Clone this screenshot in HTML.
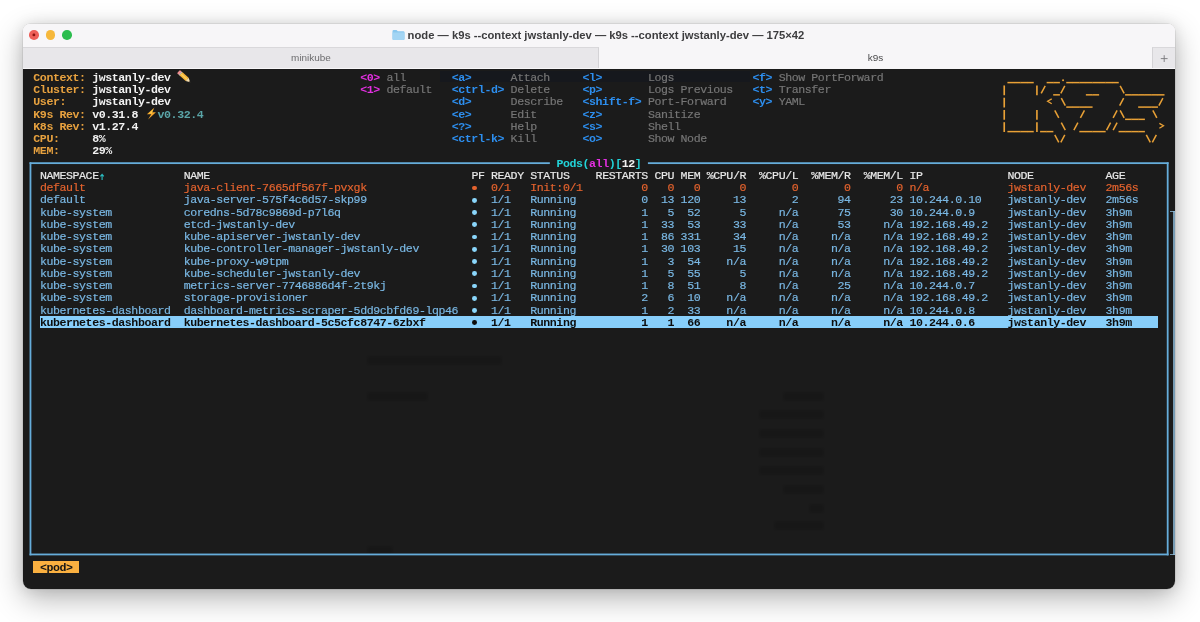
<!DOCTYPE html>
<html><head><meta charset="utf-8"><title>k9s</title>
<style>
html,body{margin:0;padding:0;}
body{width:1200px;height:622px;overflow:hidden;background:#fff;position:relative;font-family:"Liberation Sans",sans-serif;}
#win{position:absolute;left:23px;top:24px;width:1152px;height:565px;border-radius:7px 7px 8px 8px;background:linear-gradient(to bottom,#f7f6f8 0,#f7f6f8 45px,#1b1b1b 45px,#1b1b1b 100%);
 box-shadow:0 0 0 0.5px rgba(0,0,0,.12),0 10px 30px rgba(0,0,0,.29),0 0 14px rgba(0,0,0,.10);overflow:hidden;}
#titlebar{position:absolute;left:0;top:0;width:1152px;height:23px;background:#f7f6f8;}
#tabs{position:absolute;left:0;top:23px;width:1152px;height:22px;background:#f7f6f8;}
#tab1{position:absolute;left:0;top:0;width:576px;height:21px;background:#e8e7ea;border-top:1px solid #d9d8db;border-right:1px solid #d4d3d6;box-sizing:border-box;}
#plus{position:absolute;left:1128.9px;top:0;width:23.1px;height:21px;background:#e8e7ea;border-top:1px solid #d9d8db;border-left:1px solid #d4d3d6;box-sizing:border-box;}
.tabtxt{position:absolute;top:0;height:22px;line-height:21.6px;font-size:9.95px;color:#6c6c6e;text-align:center;transform:translateZ(0);}
.tl{position:absolute;top:6.2px;width:9.7px;height:9.7px;border-radius:50%;}
#title{position:absolute;left:384.6px;top:0;height:23px;line-height:22.6px;font-size:11.24px;font-weight:bold;color:#3c3c3e;white-space:pre;transform:translateZ(0);}
#term{position:absolute;left:0;top:0;width:1200px;height:622px;font-family:"Liberation Mono",monospace;font-size:11.6px;line-height:12.25px;letter-spacing:-0.4231px;transform:translateZ(0);}
.t{position:absolute;white-space:pre;height:12.25px;-webkit-text-stroke:0.18px currentColor;}
.ov{position:absolute;left:0;top:0;}
.dot{position:absolute;width:4.8px;height:4.8px;border-radius:50%;}
.sel{position:absolute;background:#87cefa;}
.crumb{position:absolute;background:#fab040;}
.ln{position:absolute;background:#66addb;}
.gb{position:absolute;z-index:-1;background:#0d0d0d;opacity:.24;filter:blur(0.9px);}
.gh{position:absolute;background:#8fbcd9;opacity:.8}
</style></head><body>
<div id="win">
 <div id="titlebar">
  <div class="tl" style="left:6.4px;background:#ee5e58;"></div>
  <div class="tl" style="left:22.8px;background:#f6b83c;"></div>
  <div class="tl" style="left:39.2px;background:#2cbd4e;"></div>
  <svg style="position:absolute;left:6.4px;top:6.2px" width="9.7" height="9.7" viewBox="0 0 9.7 9.7"><circle cx="4.9" cy="4.9" r="1.45" fill="#8c120e"/></svg>
  <svg style="position:absolute;left:368.5px;top:4.8px" width="13" height="12" viewBox="0 0 13 12"><path d="M0.5 2.2 Q0.5 1 1.7 1 L4.6 1 L5.8 2.2 L11.3 2.2 Q12.5 2.2 12.5 3.4 L12.5 9.8 Q12.5 11 11.3 11 L1.7 11 Q0.5 11 0.5 9.8 Z" fill="#8ac8ef"/><path d="M0.5 3.6 L12.5 3.6 L12.5 9.8 Q12.5 11 11.3 11 L1.7 11 Q0.5 11 0.5 9.8 Z" fill="#a3d5f4"/></svg>
  <div id="title">node — k9s --context jwstanly-dev — k9s --context jwstanly-dev — 175×42</div>
 </div>
 <div id="tabs">
  <div id="tab1"></div>
  <div class="tabtxt" style="left:0;width:576px;">minikube</div>
  <div class="tabtxt" style="left:576px;width:553px;color:#4a4a4c">k9s</div>
  <div id="plus"><svg width="22" height="22" viewBox="0 0 22 22" style="position:absolute;left:0;top:0"><path d="M7.8 10.6 H14.6 M11.2 7.2 V14" stroke="#77767a" stroke-width="0.9" fill="none"/></svg></div>
 </div>
</div>
<div id="term">
<svg class="ov" width="1200" height="622" viewBox="0 0 1200 622" fill="#66addb">
<rect x="29.57" y="162.25" width="520.27" height="1.8"/>
<rect x="647.91" y="162.25" width="520.67" height="1.8"/>
<rect x="29.57" y="553.55" width="1139.01" height="1.8"/>
<rect x="29.57" y="162.25" width="1.8" height="393.10"/>
<rect x="1166.78" y="162.25" width="1.8" height="393.10"/>
</svg>
<div class="gh" style="left:1173.4px;top:211px;width:1.6px;height:344.05px"></div>
<div class="gh" style="left:1170.4px;top:210.6px;width:4.6px;height:1.2px"></div>
<div class="gh" style="left:1170.4px;top:553.85px;width:4.6px;height:1.2px"></div>
<span class="t" style="left:33.34px;top:71.90px;color:#e8a23f;font-weight:bold;-webkit-text-stroke:0;">Context:</span>
<span class="t" style="left:92.18px;top:71.90px;color:#f2f2f2;font-weight:bold;-webkit-text-stroke:0;">jwstanly-dev</span>
<span class="t" style="left:33.34px;top:84.15px;color:#e8a23f;font-weight:bold;-webkit-text-stroke:0;">Cluster:</span>
<span class="t" style="left:92.18px;top:84.15px;color:#f2f2f2;font-weight:bold;-webkit-text-stroke:0;">jwstanly-dev</span>
<span class="t" style="left:33.34px;top:96.40px;color:#e8a23f;font-weight:bold;-webkit-text-stroke:0;">User:</span>
<span class="t" style="left:92.18px;top:96.40px;color:#f2f2f2;font-weight:bold;-webkit-text-stroke:0;">jwstanly-dev</span>
<span class="t" style="left:33.34px;top:108.65px;color:#e8a23f;font-weight:bold;-webkit-text-stroke:0;">K9s Rev:</span>
<span class="t" style="left:92.18px;top:108.65px;color:#f2f2f2;font-weight:bold;-webkit-text-stroke:0;">v0.31.8</span>
<span class="t" style="left:33.34px;top:120.90px;color:#e8a23f;font-weight:bold;-webkit-text-stroke:0;">K8s Rev:</span>
<span class="t" style="left:92.18px;top:120.90px;color:#f2f2f2;font-weight:bold;-webkit-text-stroke:0;">v1.27.4</span>
<span class="t" style="left:33.34px;top:133.15px;color:#e8a23f;font-weight:bold;-webkit-text-stroke:0;">CPU:</span>
<span class="t" style="left:92.18px;top:133.15px;color:#f2f2f2;font-weight:bold;-webkit-text-stroke:0;">8%</span>
<span class="t" style="left:33.34px;top:145.40px;color:#e8a23f;font-weight:bold;-webkit-text-stroke:0;">MEM:</span>
<span class="t" style="left:92.18px;top:145.40px;color:#f2f2f2;font-weight:bold;-webkit-text-stroke:0;">29%</span>
<span class="t" style="left:157.56px;top:108.65px;color:#5aa5a8;font-weight:bold;-webkit-text-stroke:0;">v0.32.4</span>
<span class="t" style="left:360.24px;top:71.90px;color:#e22fe0;font-weight:bold;-webkit-text-stroke:0;">&lt;0&gt;</span>
<span class="t" style="left:386.39px;top:71.90px;color:#767676;">all</span>
<span class="t" style="left:360.24px;top:84.15px;color:#e22fe0;font-weight:bold;-webkit-text-stroke:0;">&lt;1&gt;</span>
<span class="t" style="left:386.39px;top:84.15px;color:#767676;">default</span>
<span class="t" style="left:451.77px;top:71.90px;color:#2d8ff0;font-weight:bold;-webkit-text-stroke:0;">&lt;a&gt;</span>
<span class="t" style="left:510.61px;top:71.90px;color:#767676;">Attach</span>
<span class="t" style="left:451.77px;top:84.15px;color:#2d8ff0;font-weight:bold;-webkit-text-stroke:0;">&lt;ctrl-d&gt;</span>
<span class="t" style="left:510.61px;top:84.15px;color:#767676;">Delete</span>
<span class="t" style="left:451.77px;top:96.40px;color:#2d8ff0;font-weight:bold;-webkit-text-stroke:0;">&lt;d&gt;</span>
<span class="t" style="left:510.61px;top:96.40px;color:#767676;">Describe</span>
<span class="t" style="left:451.77px;top:108.65px;color:#2d8ff0;font-weight:bold;-webkit-text-stroke:0;">&lt;e&gt;</span>
<span class="t" style="left:510.61px;top:108.65px;color:#767676;">Edit</span>
<span class="t" style="left:451.77px;top:120.90px;color:#2d8ff0;font-weight:bold;-webkit-text-stroke:0;">&lt;?&gt;</span>
<span class="t" style="left:510.61px;top:120.90px;color:#767676;">Help</span>
<span class="t" style="left:451.77px;top:133.15px;color:#2d8ff0;font-weight:bold;-webkit-text-stroke:0;">&lt;ctrl-k&gt;</span>
<span class="t" style="left:510.61px;top:133.15px;color:#767676;">Kill</span>
<span class="t" style="left:582.53px;top:71.90px;color:#2d8ff0;font-weight:bold;-webkit-text-stroke:0;">&lt;l&gt;</span>
<span class="t" style="left:647.91px;top:71.90px;color:#767676;">Logs</span>
<span class="t" style="left:582.53px;top:84.15px;color:#2d8ff0;font-weight:bold;-webkit-text-stroke:0;">&lt;p&gt;</span>
<span class="t" style="left:647.91px;top:84.15px;color:#767676;">Logs Previous</span>
<span class="t" style="left:582.53px;top:96.40px;color:#2d8ff0;font-weight:bold;-webkit-text-stroke:0;">&lt;shift-f&gt;</span>
<span class="t" style="left:647.91px;top:96.40px;color:#767676;">Port-Forward</span>
<span class="t" style="left:582.53px;top:108.65px;color:#2d8ff0;font-weight:bold;-webkit-text-stroke:0;">&lt;z&gt;</span>
<span class="t" style="left:647.91px;top:108.65px;color:#767676;">Sanitize</span>
<span class="t" style="left:582.53px;top:120.90px;color:#2d8ff0;font-weight:bold;-webkit-text-stroke:0;">&lt;s&gt;</span>
<span class="t" style="left:647.91px;top:120.90px;color:#767676;">Shell</span>
<span class="t" style="left:582.53px;top:133.15px;color:#2d8ff0;font-weight:bold;-webkit-text-stroke:0;">&lt;o&gt;</span>
<span class="t" style="left:647.91px;top:133.15px;color:#767676;">Show Node</span>
<span class="t" style="left:752.52px;top:71.90px;color:#2d8ff0;font-weight:bold;-webkit-text-stroke:0;">&lt;f&gt;</span>
<span class="t" style="left:778.67px;top:71.90px;color:#767676;">Show PortForward</span>
<span class="t" style="left:752.52px;top:84.15px;color:#2d8ff0;font-weight:bold;-webkit-text-stroke:0;">&lt;t&gt;</span>
<span class="t" style="left:778.67px;top:84.15px;color:#767676;">Transfer</span>
<span class="t" style="left:752.52px;top:96.40px;color:#2d8ff0;font-weight:bold;-webkit-text-stroke:0;">&lt;y&gt;</span>
<span class="t" style="left:778.67px;top:96.40px;color:#767676;">YAML</span>
<svg class="ov" width="1200" height="622" viewBox="0 0 1200 622" fill="none" stroke="#e9a136"><path d="M1007.40 82.60H1014.14" stroke-width="1.5"/><path d="M1013.94 82.60H1020.68" stroke-width="1.5"/><path d="M1020.48 82.60H1027.21" stroke-width="1.5"/><path d="M1027.01 82.60H1033.75" stroke-width="1.5"/><path d="M1046.63 82.60H1053.37" stroke-width="1.5"/><path d="M1053.17 82.60H1059.90" stroke-width="1.5"/><circle cx="1063.07" cy="80.20" r="1.0" fill="#e9a136" stroke="none"/><path d="M1066.24 82.60H1072.98" stroke-width="1.5"/><path d="M1072.78 82.60H1079.52" stroke-width="1.5"/><path d="M1079.32 82.60H1086.06" stroke-width="1.5"/><path d="M1085.86 82.60H1092.59" stroke-width="1.5"/><path d="M1092.39 82.60H1099.13" stroke-width="1.5"/><path d="M1098.93 82.60H1105.67" stroke-width="1.5"/><path d="M1105.47 82.60H1112.21" stroke-width="1.5"/><path d="M1112.01 82.60H1118.75" stroke-width="1.5"/><path d="M1004.23 85.45V95.25" stroke-width="1.65"/><path d="M1036.92 85.45V95.25" stroke-width="1.65"/><path d="M1041.19 93.45L1045.19 85.85" stroke-width="1.5"/><path d="M1053.17 94.85H1059.90" stroke-width="1.5"/><path d="M1060.80 93.45L1064.80 85.85" stroke-width="1.5"/><path d="M1085.86 94.85H1092.59" stroke-width="1.5"/><path d="M1092.39 94.85H1099.13" stroke-width="1.5"/><path d="M1120.15 85.85L1124.15 93.45" stroke-width="1.5"/><path d="M1125.08 94.85H1131.82" stroke-width="1.5"/><path d="M1131.62 94.85H1138.36" stroke-width="1.5"/><path d="M1138.16 94.85H1144.90" stroke-width="1.5"/><path d="M1144.70 94.85H1151.44" stroke-width="1.5"/><path d="M1151.24 94.85H1157.97" stroke-width="1.5"/><path d="M1157.77 94.85H1164.51" stroke-width="1.5"/><path d="M1004.23 97.70V107.50" stroke-width="1.65"/><path d="M1051.73 98.90L1047.63 101.30L1051.73 103.70" stroke-width="1.3"/><path d="M1061.30 98.10L1065.30 105.70" stroke-width="1.5"/><path d="M1066.24 107.10H1072.98" stroke-width="1.5"/><path d="M1072.78 107.10H1079.52" stroke-width="1.5"/><path d="M1079.32 107.10H1086.06" stroke-width="1.5"/><path d="M1085.86 107.10H1092.59" stroke-width="1.5"/><path d="M1119.65 105.70L1123.65 98.10" stroke-width="1.5"/><path d="M1138.16 107.10H1144.90" stroke-width="1.5"/><path d="M1144.70 107.10H1151.44" stroke-width="1.5"/><path d="M1151.24 107.10H1157.97" stroke-width="1.5"/><path d="M1158.87 105.70L1162.87 98.10" stroke-width="1.5"/><path d="M1004.23 109.95V119.75" stroke-width="1.65"/><path d="M1036.92 109.95V119.75" stroke-width="1.65"/><path d="M1054.77 110.35L1058.77 117.95" stroke-width="1.5"/><path d="M1080.42 117.95L1084.42 110.35" stroke-width="1.5"/><path d="M1113.11 117.95L1117.11 110.35" stroke-width="1.5"/><path d="M1120.15 110.35L1124.15 117.95" stroke-width="1.5"/><path d="M1125.08 119.35H1131.82" stroke-width="1.5"/><path d="M1131.62 119.35H1138.36" stroke-width="1.5"/><path d="M1138.16 119.35H1144.90" stroke-width="1.5"/><path d="M1152.84 110.35L1156.84 117.95" stroke-width="1.5"/><path d="M1004.23 122.20V132.00" stroke-width="1.65"/><path d="M1007.40 131.60H1014.14" stroke-width="1.5"/><path d="M1013.94 131.60H1020.68" stroke-width="1.5"/><path d="M1020.48 131.60H1027.21" stroke-width="1.5"/><path d="M1027.01 131.60H1033.75" stroke-width="1.5"/><path d="M1036.92 122.20V132.00" stroke-width="1.65"/><path d="M1040.09 131.60H1046.83" stroke-width="1.5"/><path d="M1046.63 131.60H1053.37" stroke-width="1.5"/><path d="M1061.30 122.60L1065.30 130.20" stroke-width="1.5"/><path d="M1073.88 130.20L1077.88 122.60" stroke-width="1.5"/><path d="M1079.32 131.60H1086.06" stroke-width="1.5"/><path d="M1085.86 131.60H1092.59" stroke-width="1.5"/><path d="M1092.39 131.60H1099.13" stroke-width="1.5"/><path d="M1098.93 131.60H1105.67" stroke-width="1.5"/><path d="M1106.57 130.20L1110.57 122.60" stroke-width="1.5"/><path d="M1113.11 130.20L1117.11 122.60" stroke-width="1.5"/><path d="M1118.55 131.60H1125.28" stroke-width="1.5"/><path d="M1125.08 131.60H1131.82" stroke-width="1.5"/><path d="M1131.62 131.60H1138.36" stroke-width="1.5"/><path d="M1138.16 131.60H1144.90" stroke-width="1.5"/><path d="M1159.37 123.40L1163.47 125.80L1159.37 128.20" stroke-width="1.3"/><path d="M1054.77 134.85L1058.77 142.45" stroke-width="1.5"/><path d="M1060.80 142.45L1064.80 134.85" stroke-width="1.5"/><path d="M1146.30 134.85L1150.30 142.45" stroke-width="1.5"/><path d="M1152.34 142.45L1156.34 134.85" stroke-width="1.5"/></svg>
<span class="t" style="left:556.38px;top:157.65px;color:#22d3d8;font-weight:bold;-webkit-text-stroke:0;">Pods(</span>
<span class="t" style="left:589.07px;top:157.65px;color:#e22fe0;font-weight:bold;-webkit-text-stroke:0;">all</span>
<span class="t" style="left:608.68px;top:157.65px;color:#22d3d8;font-weight:bold;-webkit-text-stroke:0;">)[</span>
<span class="t" style="left:621.76px;top:157.65px;color:#f2f2f2;font-weight:bold;-webkit-text-stroke:0;">12</span>
<span class="t" style="left:634.83px;top:157.65px;color:#22d3d8;font-weight:bold;-webkit-text-stroke:0;">]</span>
<span class="t" style="left:39.88px;top:169.90px;color:#e9e9e9;">NAMESPACE</span>
<span class="t" style="left:183.71px;top:169.90px;color:#e9e9e9;">NAME</span>
<span class="t" style="left:471.38px;top:169.90px;color:#e9e9e9;">PF</span>
<span class="t" style="left:491.00px;top:169.90px;color:#e9e9e9;">READY</span>
<span class="t" style="left:530.23px;top:169.90px;color:#e9e9e9;">STATUS</span>
<span class="t" style="left:595.61px;top:169.90px;color:#e9e9e9;">RESTARTS</span>
<span class="t" style="left:654.45px;top:169.90px;color:#e9e9e9;">CPU</span>
<span class="t" style="left:680.60px;top:169.90px;color:#e9e9e9;">MEM</span>
<span class="t" style="left:706.75px;top:169.90px;color:#e9e9e9;">%CPU/R</span>
<span class="t" style="left:759.06px;top:169.90px;color:#e9e9e9;">%CPU/L</span>
<span class="t" style="left:811.36px;top:169.90px;color:#e9e9e9;">%MEM/R</span>
<span class="t" style="left:863.66px;top:169.90px;color:#e9e9e9;">%MEM/L</span>
<span class="t" style="left:909.43px;top:169.90px;color:#e9e9e9;">IP</span>
<span class="t" style="left:1007.50px;top:169.90px;color:#e9e9e9;">NODE</span>
<span class="t" style="left:1105.57px;top:169.90px;color:#e9e9e9;">AGE</span>
<span class="t" style="left:39.88px;top:182.15px;color:#e5632e;">default</span>
<span class="t" style="left:183.71px;top:182.15px;color:#e5632e;">java-client-7665df567f-pvxgk</span>
<i class="dot" style="left:472.25px;top:185.50px;background:#e5632e"></i>
<span class="t" style="left:491.00px;top:182.15px;color:#e5632e;">0/1</span>
<span class="t" style="left:530.23px;top:182.15px;color:#e5632e;">Init:0/1</span>
<span class="t" style="left:641.37px;top:182.15px;color:#e5632e;">0</span>
<span class="t" style="left:667.52px;top:182.15px;color:#e5632e;">0</span>
<span class="t" style="left:693.68px;top:182.15px;color:#e5632e;">0</span>
<span class="t" style="left:739.44px;top:182.15px;color:#e5632e;">0</span>
<span class="t" style="left:791.75px;top:182.15px;color:#e5632e;">0</span>
<span class="t" style="left:844.05px;top:182.15px;color:#e5632e;">0</span>
<span class="t" style="left:896.35px;top:182.15px;color:#e5632e;">0</span>
<span class="t" style="left:909.43px;top:182.15px;color:#e5632e;">n/a</span>
<span class="t" style="left:1007.50px;top:182.15px;color:#e5632e;">jwstanly-dev</span>
<span class="t" style="left:1105.57px;top:182.15px;color:#e5632e;">2m56s</span>
<span class="t" style="left:39.88px;top:194.40px;color:#7ab8e4;">default</span>
<span class="t" style="left:183.71px;top:194.40px;color:#7ab8e4;">java-server-575f4c6d57-skp99</span>
<i class="dot" style="left:472.25px;top:197.75px;background:#8ad6fb"></i>
<span class="t" style="left:491.00px;top:194.40px;color:#7ab8e4;">1/1</span>
<span class="t" style="left:530.23px;top:194.40px;color:#7ab8e4;">Running</span>
<span class="t" style="left:641.37px;top:194.40px;color:#7ab8e4;">0</span>
<span class="t" style="left:660.99px;top:194.40px;color:#7ab8e4;">13</span>
<span class="t" style="left:680.60px;top:194.40px;color:#7ab8e4;">120</span>
<span class="t" style="left:732.90px;top:194.40px;color:#7ab8e4;">13</span>
<span class="t" style="left:791.75px;top:194.40px;color:#7ab8e4;">2</span>
<span class="t" style="left:837.51px;top:194.40px;color:#7ab8e4;">94</span>
<span class="t" style="left:889.82px;top:194.40px;color:#7ab8e4;">23</span>
<span class="t" style="left:909.43px;top:194.40px;color:#7ab8e4;">10.244.0.10</span>
<span class="t" style="left:1007.50px;top:194.40px;color:#7ab8e4;">jwstanly-dev</span>
<span class="t" style="left:1105.57px;top:194.40px;color:#7ab8e4;">2m56s</span>
<span class="t" style="left:39.88px;top:206.65px;color:#7ab8e4;">kube-system</span>
<span class="t" style="left:183.71px;top:206.65px;color:#7ab8e4;">coredns-5d78c9869d-p7l6q</span>
<i class="dot" style="left:472.25px;top:210.00px;background:#8ad6fb"></i>
<span class="t" style="left:491.00px;top:206.65px;color:#7ab8e4;">1/1</span>
<span class="t" style="left:530.23px;top:206.65px;color:#7ab8e4;">Running</span>
<span class="t" style="left:641.37px;top:206.65px;color:#7ab8e4;">1</span>
<span class="t" style="left:667.52px;top:206.65px;color:#7ab8e4;">5</span>
<span class="t" style="left:687.14px;top:206.65px;color:#7ab8e4;">52</span>
<span class="t" style="left:739.44px;top:206.65px;color:#7ab8e4;">5</span>
<span class="t" style="left:778.67px;top:206.65px;color:#7ab8e4;">n/a</span>
<span class="t" style="left:837.51px;top:206.65px;color:#7ab8e4;">75</span>
<span class="t" style="left:889.82px;top:206.65px;color:#7ab8e4;">30</span>
<span class="t" style="left:909.43px;top:206.65px;color:#7ab8e4;">10.244.0.9</span>
<span class="t" style="left:1007.50px;top:206.65px;color:#7ab8e4;">jwstanly-dev</span>
<span class="t" style="left:1105.57px;top:206.65px;color:#7ab8e4;">3h9m</span>
<span class="t" style="left:39.88px;top:218.90px;color:#7ab8e4;">kube-system</span>
<span class="t" style="left:183.71px;top:218.90px;color:#7ab8e4;">etcd-jwstanly-dev</span>
<i class="dot" style="left:472.25px;top:222.25px;background:#8ad6fb"></i>
<span class="t" style="left:491.00px;top:218.90px;color:#7ab8e4;">1/1</span>
<span class="t" style="left:530.23px;top:218.90px;color:#7ab8e4;">Running</span>
<span class="t" style="left:641.37px;top:218.90px;color:#7ab8e4;">1</span>
<span class="t" style="left:660.99px;top:218.90px;color:#7ab8e4;">33</span>
<span class="t" style="left:687.14px;top:218.90px;color:#7ab8e4;">53</span>
<span class="t" style="left:732.90px;top:218.90px;color:#7ab8e4;">33</span>
<span class="t" style="left:778.67px;top:218.90px;color:#7ab8e4;">n/a</span>
<span class="t" style="left:837.51px;top:218.90px;color:#7ab8e4;">53</span>
<span class="t" style="left:883.28px;top:218.90px;color:#7ab8e4;">n/a</span>
<span class="t" style="left:909.43px;top:218.90px;color:#7ab8e4;">192.168.49.2</span>
<span class="t" style="left:1007.50px;top:218.90px;color:#7ab8e4;">jwstanly-dev</span>
<span class="t" style="left:1105.57px;top:218.90px;color:#7ab8e4;">3h9m</span>
<span class="t" style="left:39.88px;top:231.15px;color:#7ab8e4;">kube-system</span>
<span class="t" style="left:183.71px;top:231.15px;color:#7ab8e4;">kube-apiserver-jwstanly-dev</span>
<i class="dot" style="left:472.25px;top:234.50px;background:#8ad6fb"></i>
<span class="t" style="left:491.00px;top:231.15px;color:#7ab8e4;">1/1</span>
<span class="t" style="left:530.23px;top:231.15px;color:#7ab8e4;">Running</span>
<span class="t" style="left:641.37px;top:231.15px;color:#7ab8e4;">1</span>
<span class="t" style="left:660.99px;top:231.15px;color:#7ab8e4;">86</span>
<span class="t" style="left:680.60px;top:231.15px;color:#7ab8e4;">331</span>
<span class="t" style="left:732.90px;top:231.15px;color:#7ab8e4;">34</span>
<span class="t" style="left:778.67px;top:231.15px;color:#7ab8e4;">n/a</span>
<span class="t" style="left:830.97px;top:231.15px;color:#7ab8e4;">n/a</span>
<span class="t" style="left:883.28px;top:231.15px;color:#7ab8e4;">n/a</span>
<span class="t" style="left:909.43px;top:231.15px;color:#7ab8e4;">192.168.49.2</span>
<span class="t" style="left:1007.50px;top:231.15px;color:#7ab8e4;">jwstanly-dev</span>
<span class="t" style="left:1105.57px;top:231.15px;color:#7ab8e4;">3h9m</span>
<span class="t" style="left:39.88px;top:243.40px;color:#7ab8e4;">kube-system</span>
<span class="t" style="left:183.71px;top:243.40px;color:#7ab8e4;">kube-controller-manager-jwstanly-dev</span>
<i class="dot" style="left:472.25px;top:246.75px;background:#8ad6fb"></i>
<span class="t" style="left:491.00px;top:243.40px;color:#7ab8e4;">1/1</span>
<span class="t" style="left:530.23px;top:243.40px;color:#7ab8e4;">Running</span>
<span class="t" style="left:641.37px;top:243.40px;color:#7ab8e4;">1</span>
<span class="t" style="left:660.99px;top:243.40px;color:#7ab8e4;">30</span>
<span class="t" style="left:680.60px;top:243.40px;color:#7ab8e4;">103</span>
<span class="t" style="left:732.90px;top:243.40px;color:#7ab8e4;">15</span>
<span class="t" style="left:778.67px;top:243.40px;color:#7ab8e4;">n/a</span>
<span class="t" style="left:830.97px;top:243.40px;color:#7ab8e4;">n/a</span>
<span class="t" style="left:883.28px;top:243.40px;color:#7ab8e4;">n/a</span>
<span class="t" style="left:909.43px;top:243.40px;color:#7ab8e4;">192.168.49.2</span>
<span class="t" style="left:1007.50px;top:243.40px;color:#7ab8e4;">jwstanly-dev</span>
<span class="t" style="left:1105.57px;top:243.40px;color:#7ab8e4;">3h9m</span>
<span class="t" style="left:39.88px;top:255.65px;color:#7ab8e4;">kube-system</span>
<span class="t" style="left:183.71px;top:255.65px;color:#7ab8e4;">kube-proxy-w9tpm</span>
<i class="dot" style="left:472.25px;top:259.00px;background:#8ad6fb"></i>
<span class="t" style="left:491.00px;top:255.65px;color:#7ab8e4;">1/1</span>
<span class="t" style="left:530.23px;top:255.65px;color:#7ab8e4;">Running</span>
<span class="t" style="left:641.37px;top:255.65px;color:#7ab8e4;">1</span>
<span class="t" style="left:667.52px;top:255.65px;color:#7ab8e4;">3</span>
<span class="t" style="left:687.14px;top:255.65px;color:#7ab8e4;">54</span>
<span class="t" style="left:726.37px;top:255.65px;color:#7ab8e4;">n/a</span>
<span class="t" style="left:778.67px;top:255.65px;color:#7ab8e4;">n/a</span>
<span class="t" style="left:830.97px;top:255.65px;color:#7ab8e4;">n/a</span>
<span class="t" style="left:883.28px;top:255.65px;color:#7ab8e4;">n/a</span>
<span class="t" style="left:909.43px;top:255.65px;color:#7ab8e4;">192.168.49.2</span>
<span class="t" style="left:1007.50px;top:255.65px;color:#7ab8e4;">jwstanly-dev</span>
<span class="t" style="left:1105.57px;top:255.65px;color:#7ab8e4;">3h9m</span>
<span class="t" style="left:39.88px;top:267.90px;color:#7ab8e4;">kube-system</span>
<span class="t" style="left:183.71px;top:267.90px;color:#7ab8e4;">kube-scheduler-jwstanly-dev</span>
<i class="dot" style="left:472.25px;top:271.25px;background:#8ad6fb"></i>
<span class="t" style="left:491.00px;top:267.90px;color:#7ab8e4;">1/1</span>
<span class="t" style="left:530.23px;top:267.90px;color:#7ab8e4;">Running</span>
<span class="t" style="left:641.37px;top:267.90px;color:#7ab8e4;">1</span>
<span class="t" style="left:667.52px;top:267.90px;color:#7ab8e4;">5</span>
<span class="t" style="left:687.14px;top:267.90px;color:#7ab8e4;">55</span>
<span class="t" style="left:739.44px;top:267.90px;color:#7ab8e4;">5</span>
<span class="t" style="left:778.67px;top:267.90px;color:#7ab8e4;">n/a</span>
<span class="t" style="left:830.97px;top:267.90px;color:#7ab8e4;">n/a</span>
<span class="t" style="left:883.28px;top:267.90px;color:#7ab8e4;">n/a</span>
<span class="t" style="left:909.43px;top:267.90px;color:#7ab8e4;">192.168.49.2</span>
<span class="t" style="left:1007.50px;top:267.90px;color:#7ab8e4;">jwstanly-dev</span>
<span class="t" style="left:1105.57px;top:267.90px;color:#7ab8e4;">3h9m</span>
<span class="t" style="left:39.88px;top:280.15px;color:#7ab8e4;">kube-system</span>
<span class="t" style="left:183.71px;top:280.15px;color:#7ab8e4;">metrics-server-7746886d4f-2t9kj</span>
<i class="dot" style="left:472.25px;top:283.50px;background:#8ad6fb"></i>
<span class="t" style="left:491.00px;top:280.15px;color:#7ab8e4;">1/1</span>
<span class="t" style="left:530.23px;top:280.15px;color:#7ab8e4;">Running</span>
<span class="t" style="left:641.37px;top:280.15px;color:#7ab8e4;">1</span>
<span class="t" style="left:667.52px;top:280.15px;color:#7ab8e4;">8</span>
<span class="t" style="left:687.14px;top:280.15px;color:#7ab8e4;">51</span>
<span class="t" style="left:739.44px;top:280.15px;color:#7ab8e4;">8</span>
<span class="t" style="left:778.67px;top:280.15px;color:#7ab8e4;">n/a</span>
<span class="t" style="left:837.51px;top:280.15px;color:#7ab8e4;">25</span>
<span class="t" style="left:883.28px;top:280.15px;color:#7ab8e4;">n/a</span>
<span class="t" style="left:909.43px;top:280.15px;color:#7ab8e4;">10.244.0.7</span>
<span class="t" style="left:1007.50px;top:280.15px;color:#7ab8e4;">jwstanly-dev</span>
<span class="t" style="left:1105.57px;top:280.15px;color:#7ab8e4;">3h9m</span>
<span class="t" style="left:39.88px;top:292.40px;color:#7ab8e4;">kube-system</span>
<span class="t" style="left:183.71px;top:292.40px;color:#7ab8e4;">storage-provisioner</span>
<i class="dot" style="left:472.25px;top:295.75px;background:#8ad6fb"></i>
<span class="t" style="left:491.00px;top:292.40px;color:#7ab8e4;">1/1</span>
<span class="t" style="left:530.23px;top:292.40px;color:#7ab8e4;">Running</span>
<span class="t" style="left:641.37px;top:292.40px;color:#7ab8e4;">2</span>
<span class="t" style="left:667.52px;top:292.40px;color:#7ab8e4;">6</span>
<span class="t" style="left:687.14px;top:292.40px;color:#7ab8e4;">10</span>
<span class="t" style="left:726.37px;top:292.40px;color:#7ab8e4;">n/a</span>
<span class="t" style="left:778.67px;top:292.40px;color:#7ab8e4;">n/a</span>
<span class="t" style="left:830.97px;top:292.40px;color:#7ab8e4;">n/a</span>
<span class="t" style="left:883.28px;top:292.40px;color:#7ab8e4;">n/a</span>
<span class="t" style="left:909.43px;top:292.40px;color:#7ab8e4;">192.168.49.2</span>
<span class="t" style="left:1007.50px;top:292.40px;color:#7ab8e4;">jwstanly-dev</span>
<span class="t" style="left:1105.57px;top:292.40px;color:#7ab8e4;">3h9m</span>
<span class="t" style="left:39.88px;top:304.65px;color:#7ab8e4;">kubernetes-dashboard</span>
<span class="t" style="left:183.71px;top:304.65px;color:#7ab8e4;">dashboard-metrics-scraper-5dd9cbfd69-lqp46</span>
<i class="dot" style="left:472.25px;top:308.00px;background:#8ad6fb"></i>
<span class="t" style="left:491.00px;top:304.65px;color:#7ab8e4;">1/1</span>
<span class="t" style="left:530.23px;top:304.65px;color:#7ab8e4;">Running</span>
<span class="t" style="left:641.37px;top:304.65px;color:#7ab8e4;">1</span>
<span class="t" style="left:667.52px;top:304.65px;color:#7ab8e4;">2</span>
<span class="t" style="left:687.14px;top:304.65px;color:#7ab8e4;">33</span>
<span class="t" style="left:726.37px;top:304.65px;color:#7ab8e4;">n/a</span>
<span class="t" style="left:778.67px;top:304.65px;color:#7ab8e4;">n/a</span>
<span class="t" style="left:830.97px;top:304.65px;color:#7ab8e4;">n/a</span>
<span class="t" style="left:883.28px;top:304.65px;color:#7ab8e4;">n/a</span>
<span class="t" style="left:909.43px;top:304.65px;color:#7ab8e4;">10.244.0.8</span>
<span class="t" style="left:1007.50px;top:304.65px;color:#7ab8e4;">jwstanly-dev</span>
<span class="t" style="left:1105.57px;top:304.65px;color:#7ab8e4;">3h9m</span>
<div class="sel" style="left:39.88px;top:315.85px;width:1118.00px;height:11.95px"></div>
<span class="t" style="left:39.88px;top:316.90px;color:#0c0c0c;font-weight:bold;-webkit-text-stroke:0;">kubernetes-dashboard</span>
<span class="t" style="left:183.71px;top:316.90px;color:#0c0c0c;font-weight:bold;-webkit-text-stroke:0;">kubernetes-dashboard-5c5cfc8747-6zbxf</span>
<i class="dot" style="left:472.25px;top:320.25px;background:#0c0c0c"></i>
<span class="t" style="left:491.00px;top:316.90px;color:#0c0c0c;font-weight:bold;-webkit-text-stroke:0;">1/1</span>
<span class="t" style="left:530.23px;top:316.90px;color:#0c0c0c;font-weight:bold;-webkit-text-stroke:0;">Running</span>
<span class="t" style="left:641.37px;top:316.90px;color:#0c0c0c;font-weight:bold;-webkit-text-stroke:0;">1</span>
<span class="t" style="left:667.52px;top:316.90px;color:#0c0c0c;font-weight:bold;-webkit-text-stroke:0;">1</span>
<span class="t" style="left:687.14px;top:316.90px;color:#0c0c0c;font-weight:bold;-webkit-text-stroke:0;">66</span>
<span class="t" style="left:726.37px;top:316.90px;color:#0c0c0c;font-weight:bold;-webkit-text-stroke:0;">n/a</span>
<span class="t" style="left:778.67px;top:316.90px;color:#0c0c0c;font-weight:bold;-webkit-text-stroke:0;">n/a</span>
<span class="t" style="left:830.97px;top:316.90px;color:#0c0c0c;font-weight:bold;-webkit-text-stroke:0;">n/a</span>
<span class="t" style="left:883.28px;top:316.90px;color:#0c0c0c;font-weight:bold;-webkit-text-stroke:0;">n/a</span>
<span class="t" style="left:909.43px;top:316.90px;color:#0c0c0c;font-weight:bold;-webkit-text-stroke:0;">10.244.0.6</span>
<span class="t" style="left:1007.50px;top:316.90px;color:#0c0c0c;font-weight:bold;-webkit-text-stroke:0;">jwstanly-dev</span>
<span class="t" style="left:1105.57px;top:316.90px;color:#0c0c0c;font-weight:bold;-webkit-text-stroke:0;">3h9m</span>
<svg class="ov" width="1200" height="622" viewBox="0 0 1200 622"><g transform="translate(184.1 76.7) rotate(42)"><rect x="-7.6" y="-2.2" width="2.6" height="4.4" rx="1" fill="#ef8d8f"/><rect x="-5.2" y="-2.2" width="1.2" height="4.4" fill="#c9c4c0"/><rect x="-4.1" y="-2.2" width="8.2" height="4.4" fill="#f6b23a"/><rect x="-4.1" y="-0.6" width="8.2" height="1.3" fill="#fbd25c"/><path d="M4.1 -2.2L8.2 0L4.1 2.2Z" fill="#f7dfae"/><path d="M6.9 -0.7L8.4 0L6.9 0.7Z" fill="#5a5148"/></g><path d="M154.5 107.6L146.9 114.3L151.2 114.3L148.1 119.6L155.9 112.2L151.7 112.2Z" fill="#f5a62a"/><path d="M153.6 108.9L148.6 113.6L151.9 113.6Z" fill="#fbc845"/><path d="M102.09 174.40V180.10M100.39 176.30L102.09 174.30L103.79 176.30" stroke="#2bbcc0" stroke-width="1.1" fill="none"/></svg>
<div class="gb" style="left:368px;top:357px;width:133px;height:7px"></div>
<div class="gb" style="left:368px;top:392.5px;width:59px;height:7px"></div>
<div class="gb" style="left:368px;top:547px;width:24px;height:6px"></div>
<div class="gb" style="left:784px;top:392.5px;width:39px;height:7px"></div>
<div class="gb" style="left:760px;top:411px;width:63px;height:7px"></div>
<div class="gb" style="left:760px;top:430px;width:63px;height:7px"></div>
<div class="gb" style="left:760px;top:448.8px;width:63px;height:7px"></div>
<div class="gb" style="left:760px;top:467.4px;width:63px;height:7px"></div>
<div class="gb" style="left:784px;top:485.6px;width:39px;height:7px"></div>
<div class="gb" style="left:810px;top:505px;width:13px;height:7px"></div>
<div class="gb" style="left:775px;top:522.4px;width:48px;height:7px"></div>
<div class="gb" style="left:440px;top:71px;width:310px;height:11px;background:#12151f;opacity:.5;filter:none"></div>
<div class="crumb" style="left:33.34px;top:560.55px;width:45.77px;height:12.25px"></div>
<span class="t" style="left:39.88px;top:561.90px;color:#151515;font-weight:bold;-webkit-text-stroke:0;">&lt;pod&gt;</span>
</div>
</body></html>
